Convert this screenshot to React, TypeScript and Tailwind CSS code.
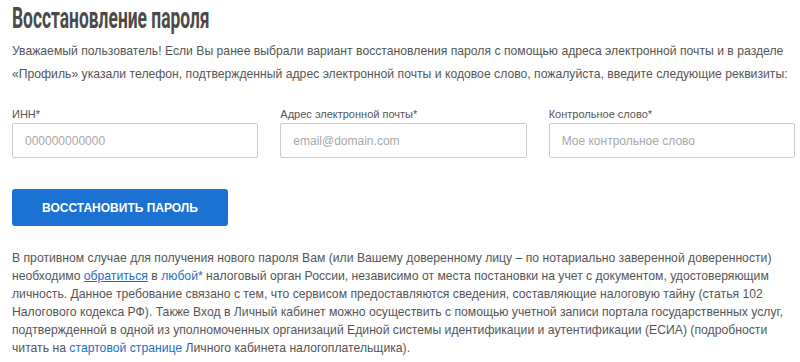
export default function App() {
  return (
    <div className="w-[800px] h-[362px] overflow-hidden bg-white pl-3 pr-[5px] font-['Liberation_Sans',Arial,sans-serif] text-[#555]">
      <h1 className="h-[36px] text-[30px] leading-[36px] font-bold text-[#4a4a4a] font-['Roboto',sans-serif] origin-left scale-x-[0.58] whitespace-nowrap">
        Восстановление пароля
      </h1>

      <p className="mt-[4px] text-[12.2px] leading-[23px]">
        Уважаемый пользователь! Если Вы ранее выбрали вариант восстановления пароля с помощью адреса электронной почты и в разделе «Профиль» указали телефон, подтвержденный адрес электронной почты и кодовое слово, пожалуйста, введите следующие реквизиты:
      </p>

      <div className="mt-[21px] grid grid-cols-3 gap-x-[22px]">
        <Field label="ИНН*" placeholder="000000000000" />
        <Field label="Адрес электронной почты*" placeholder="email@domain.com" />
        <Field label="Контрольное слово*" placeholder="Мое контрольное слово" />
      </div>

      <button className="mt-[31px] w-[216px] h-[37px] rounded-[3px] bg-[#1b72d2] text-white text-[12px] font-bold uppercase">
        Восстановить пароль
      </button>

      <p className="mt-[23px] text-[12.2px] leading-[18px]">
        В противном случае для получения нового пароля Вам (или Вашему доверенному лицу – по нотариально заверенной доверенности) необходимо{' '}
        <a className="text-[#1a6fc9] underline">обратиться</a> в{' '}
        <a className="text-[#1a6fc9]">любой*</a> налоговый орган России, независимо от места постановки на учет с документом, удостоверяющим личность. Данное требование связано с тем, что сервисом предоставляются сведения, составляющие налоговую тайну (статья 102 Налогового кодекса РФ). Также Вход в Личный кабинет можно осуществить с помощью учетной записи портала государственных услуг, подтвержденной в одной из уполномоченных организаций Единой системы идентификации и аутентификации (ЕСИА) (подробности читать на{' '}
        <a className="text-[#1a6fc9]">стартовой странице</a> Личного кабинета налогоплательщика).
      </p>
    </div>
  );
}

function Field({ label, placeholder }: { label: string; placeholder: string }) {
  return (
    <label className="flex flex-col">
      <span className="text-[11px] leading-[14px] text-[#555]">{label}</span>
      <input
        placeholder={placeholder}
        className="mt-[2px] h-[35px] rounded-[2px] border border-[#ccc] px-3 text-[12px] text-[#333] placeholder:text-[#a8a8a8] outline-none"
      />
    </label>
  );
}
